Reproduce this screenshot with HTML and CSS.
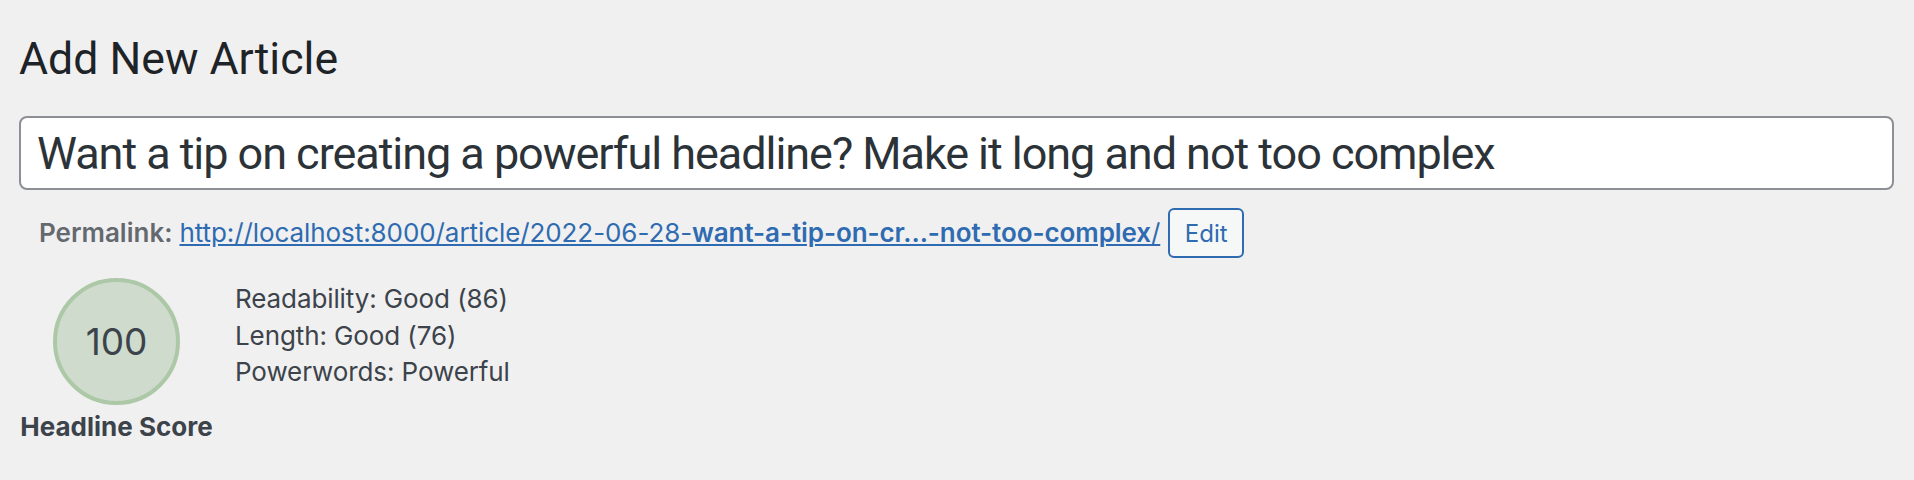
FILE: index.html
```html
<!DOCTYPE html>
<html lang="en">
<head>
<meta charset="utf-8">
<title>Add New Article</title>
<link rel="stylesheet" href="styles.css">
</head>
<body>
<div class="wrap">
  <h1 class="page-title">Add New Article</h1>
  <div class="title-field">Want a tip on creating a powerful headline? Make it long and not too complex</div>
  <div class="permalink">
    <strong class="permalink-label">Permalink:</strong>
    <a class="permalink-url" href="#">http://localhost:8000/article/2022-06-28-<b>want-a-tip-on-cr...-not-too-complex</b>/</a>
    <button class="edit-btn" type="button">Edit</button>
  </div>
  <div class="score">
    <div class="score-badge">
      <div class="score-circle">100</div>
      <div class="score-label">Headline Score</div>
    </div>
    <ul class="score-details">
      <li>Readability: Good (86)</li>
      <li>Length: Good (76)</li>
      <li>Powerwords: Powerful</li>
    </ul>
  </div>
</div>
</body>
</html>
```

FILE: styles.css
```css
html, body {
  margin: 0;
  padding: 0;
  background: #f0f0f1;
}
body {
  font-family: Inter, "Noto Sans", sans-serif;
  color: #3c434a;
}
.wrap {
  padding: 0 20px 0 19px;
}
.page-title {
  margin: 0;
  padding-top: 30px;
  font-family: Roboto, "Liberation Sans", sans-serif;
  font-size: 44.6px;
  font-weight: 400;
  line-height: 58px;
  color: #1d2327;
}
.title-field {
  margin-top: 28px;
  box-sizing: border-box;
  height: 74px;
  background: #fff;
  border: 2px solid #8c8f94;
  border-radius: 8px;
  padding: 0 16px;
  display: flex;
  align-items: center;
  font-family: Roboto, "Liberation Sans", sans-serif;
  font-size: 45px;
  color: #2c3338;
  letter-spacing: -1.05px;
}
.permalink {
  display: flex;
  align-items: center;
  margin-top: 18px;
  padding-left: 20px;
  font-size: 26px;
  line-height: 50px;
}
.permalink-label {
  color: #646970;
  font-weight: 600;
  margin-right: 7px;
}
.permalink-url {
  color: #2f6bb0;
  text-decoration: underline;
  letter-spacing: -0.08px;
}
.permalink-url b {
  font-weight: 600;
}
.edit-btn {
  margin-left: 8px;
  box-sizing: border-box;
  height: 50px;
  width: 76px;
  padding: 0;
  border: 2px solid #2f6bb0;
  border-radius: 6px;
  background: #f6f7f7;
  color: #2f6bb0;
  font-family: inherit;
  font-size: 24px;
}
.score {
  display: flex;
  margin-top: 20px;
}
.score-badge {
  display: flex;
  flex-direction: column;
  align-items: center;
  width: 195px;
}
.score-circle {
  box-sizing: border-box;
  width: 127px;
  height: 127px;
  border-radius: 50%;
  border: 4px solid #acc8a6;
  background: #cedbcd;
  display: flex;
  align-items: center;
  justify-content: center;
  font-size: 37px;
  color: #3c434a;
}
.score-label {
  margin-top: 6px;
  font-weight: 700;
  font-size: 26px;
  color: #3c434a;
}
.score-details {
  list-style: none;
  margin: 0;
  padding: 3px 0 0 21px;
  font-size: 26px;
  line-height: 36.5px;
  letter-spacing: -0.1px;
}
```
